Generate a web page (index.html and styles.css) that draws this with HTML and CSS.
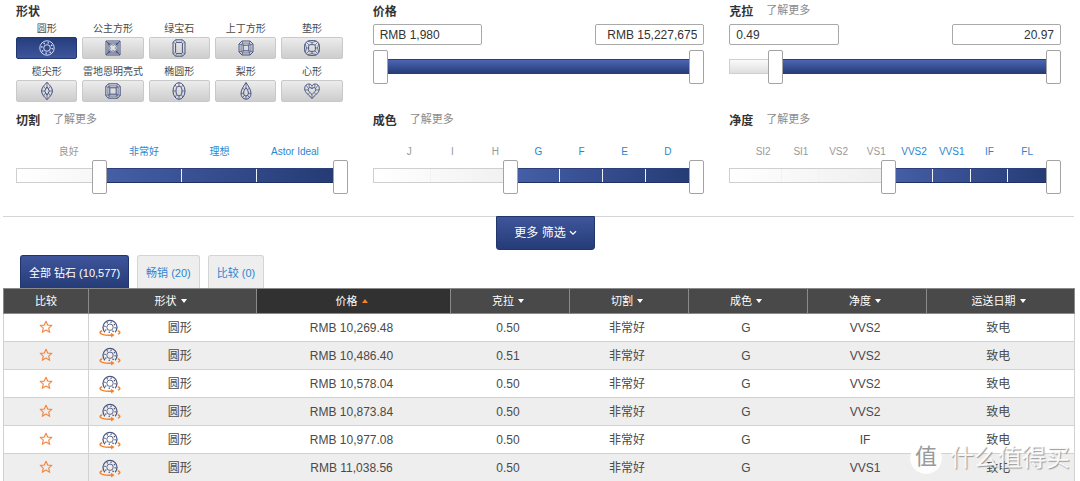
FILE: index.html
```html
<!DOCTYPE html>
<html lang="zh-CN">
<head>
<meta charset="utf-8">
<meta name="viewport" content="width=device-width, initial-scale=1">
<title>钻石筛选</title>
<link rel="stylesheet" href="styles.css">
</head>
<body>
<svg class="sprite" aria-hidden="true">
  <symbol id="round" viewBox="0 0 18 18"><circle cx="9" cy="9" r="7.2"/><circle cx="9" cy="9" r="3.3"/><circle cx="9" cy="9" r="5.3" stroke-width="1.6" stroke-dasharray="1.3 2.86"/></symbol>
  <symbol id="princess" viewBox="0 0 18 18"><path d="M2 2H16V16H2ZM4 4H14V14H4ZM2 2 6.5 6.5M16 2 11.5 6.5M2 16 6.5 11.5M16 16 11.5 11.5"/><path stroke-width=".7" d="M4 4 6.3 9 4 14 9 11.7 14 14 11.7 9 14 4 9 6.3Z"/></symbol>
  <symbol id="emerald" viewBox="0 0 18 18"><path d="M5.5.8H12.5L15 3.3V14.7L12.5 17.2H5.5L3 14.7V3.3ZM6.6 3.4H11.4L12.4 4.4V13.6L11.4 14.6H6.6L5.6 13.6V4.4Z"/><path stroke-width=".6" d="M5.5.8 6.6 3.4M12.5.8 11.4 3.4M15 3.3 12.4 4.4M3 3.3 5.6 4.4M3 14.7 5.6 13.6M5.5 17.2 6.6 14.6M12.5 17.2 11.4 14.6M15 14.7 12.4 13.6"/></symbol>
  <symbol id="asscher" viewBox="0 0 18 18"><path d="M5 2H13L16 5V13L13 16H5L2 13V5ZM6.2 6.2H11.8V11.8H6.2Z"/><path stroke-width=".7" d="M5.6 4.1H12.4L13.9 5.6V12.4L12.4 13.9H5.6L4.1 12.4V5.6ZM5 2 6.2 6.2M13 2 11.8 6.2M16 5 11.8 6.2M2 5 6.2 6.2M2 13 6.2 11.8M5 16 6.2 11.8M13 16 11.8 11.8M16 13 11.8 11.8"/></symbol>
  <symbol id="cushion" viewBox="0 0 18 18"><rect x="1.6" y="1.6" width="14.8" height="14.8" rx="5.5"/><rect x="5.6" y="5.6" width="6.8" height="6.8" rx="2"/><path stroke-width=".7" d="M5 2.2 9 3.6 13 2.2M5 15.8 9 14.4 13 15.8M2.2 5 3.6 9 2.2 13M15.8 5 14.4 9 15.8 13M3.5 3.5 6 6M14.5 3.5 12 6M3.5 14.5 6 12M14.5 14.5 12 12M9 3.6V5.6M9 12.4V14.4M3.6 9H5.6M12.4 9H14.4"/></symbol>
  <symbol id="marquise" viewBox="0 0 18 18"><path d="M9 .4C12.5 3.5 14.4 6.4 14.4 9S12.5 14.5 9 17.6C5.5 14.5 3.6 11.6 3.6 9S5.5 3.5 9 .4ZM9 4.8 11.4 9 9 13.2 6.6 9Z"/><path stroke-width=".7" d="M9 .4V4.8M9 13.2V17.6M3.6 9H6.6M11.4 9H14.4M5.7 4.2 7.7 7M12.3 4.2 10.3 7M5.7 13.8 7.7 11M12.3 13.8 10.3 11"/></symbol>
  <symbol id="radiant" viewBox="0 0 18 18"><path d="M4.4 1.8H13.6L16.2 4.4V13.6L13.6 16.2H4.4L1.8 13.6V4.4ZM5.8 5.8H12.2V12.2H5.8Z"/><path stroke-width=".7" d="M5.2 3.9H12.8L14.1 5.2V12.8L12.8 14.1H5.2L3.9 12.8V5.2ZM4.4 1.8 5.8 5.8M13.6 1.8 12.2 5.8M16.2 4.4 12.2 5.8M1.8 4.4 5.8 5.8M1.8 13.6 5.8 12.2M4.4 16.2 5.8 12.2M13.6 16.2 12.2 12.2M16.2 13.6 12.2 12.2"/></symbol>
  <symbol id="oval" viewBox="0 0 18 18"><ellipse cx="9" cy="9" rx="6" ry="8.3"/><ellipse cx="9" cy="9" rx="3" ry="4.8"/><path stroke-width=".7" d="M9 .7V4.2M9 13.8V17.3M3 9H6M12 9H15M5 2.9 7 5.6M13 2.9 11 5.6M5 15.1 7 12.4M13 15.1 11 12.4"/></symbol>
  <symbol id="pear" viewBox="0 0 18 18"><path d="M9 .6C6.4 4.3 4 8 4 11.6A5 5.6 0 0 0 14 11.6C14 8 11.6 4.3 9 .6ZM9 5.5C7.5 7.7 6.6 9.5 6.6 11.2A2.4 2.8 0 0 0 11.4 11.2C11.4 9.5 10.5 7.7 9 5.5Z"/><path stroke-width=".7" d="M9 .6V5.5M5.6 6 7.6 8M12.4 6 10.4 8M4 11.4H6.6M11.4 11.4H14M9 14V17.2M5.6 15.6 7.4 13.4M12.4 15.6 10.6 13.4"/></symbol>
  <symbol id="heart" viewBox="0 0 18 18"><path d="M9 3.8C7.6 1.7 4.8 1.4 3 3.2 1 5.2 1.4 8.4 3.2 10.6 4.9 12.7 7 14.5 9 16.4 11 14.5 13.1 12.7 14.8 10.6 16.6 8.4 17 5.2 15 3.2 13.2 1.4 10.4 1.7 9 3.8ZM9 6.8C8 5.4 6.3 5.2 5.5 6.4 4.6 8 5.9 9.6 9 12.6 12.1 9.6 13.4 8 12.5 6.4 11.7 5.2 10 5.4 9 6.8Z"/><path stroke-width=".7" d="M9 3.8V6.8M3 3.2 5.5 6.4M15 3.2 12.5 6.4M6.2 2V5.5M11.8 2V5.5M1.8 7.8 5.3 8M16.2 7.8 12.7 8M5 12.5 6.8 10.6M13 12.5 11.2 10.6M9 12.6V16.4"/></symbol>
  <symbol id="spin" viewBox="0 0 22 20">
    <g fill="none" stroke="#4c5780"><path stroke-width="1.3" d="M5.9 14.2A7 7 0 1 1 16.1 14.2"/><circle cx="11" cy="9.2" r="3.2" stroke-width=".9"/><circle cx="11" cy="9.2" r="5.1" stroke-width="1.5" stroke-dasharray="1.2 2.8"/></g>
    <path fill="none" stroke="#f5822a" stroke-width="1.5" d="M3.2 12.8C.4 13.8.2 15.4 3.3 16.4 6 17.2 9.5 17.4 13 17.2M18.8 12.8C21.3 13.6 21.8 15 18.8 16.1"/><path fill="#f5822a" d="M11.8 14.8 15.6 17.1 12.2 19.5Z"/>
  </symbol>
  <symbol id="star" viewBox="0 0 14 14"><path fill="none" stroke="#f28a45" stroke-width="1.2" stroke-linejoin="round" d="M7 1.3 8.7 5.1 12.8 5.4 9.7 8.1 10.7 12.3 7 10.1 3.3 12.3 4.3 8.1 1.2 5.4 5.3 5.1Z"/></symbol>
  <symbol id="down" viewBox="0 0 6 4"><path fill="currentColor" d="M0 0H6L3 4Z"/></symbol>
  <symbol id="up" viewBox="0 0 6 4"><path fill="currentColor" d="M0 4H6L3 0Z"/></symbol>
</svg>

<main class="page">
  <form class="filters">
    <section class="filter">
      <div class="filter-head"><h2>形状</h2></div>
      <div class="shapes">
        <div class="shape"><span id="s1">圆形</span><button type="button" class="selected" aria-pressed="true" aria-labelledby="s1"><svg><use href="#round"/></svg></button></div>
        <div class="shape"><span id="s2">公主方形</span><button type="button" aria-labelledby="s2"><svg><use href="#princess"/></svg></button></div>
        <div class="shape"><span id="s3">绿宝石</span><button type="button" aria-labelledby="s3"><svg><use href="#emerald"/></svg></button></div>
        <div class="shape"><span id="s4">上丁方形</span><button type="button" aria-labelledby="s4"><svg><use href="#asscher"/></svg></button></div>
        <div class="shape"><span id="s5">垫形</span><button type="button" aria-labelledby="s5"><svg><use href="#cushion"/></svg></button></div>
        <div class="shape"><span id="s6">榄尖形</span><button type="button" aria-labelledby="s6"><svg><use href="#marquise"/></svg></button></div>
        <div class="shape"><span id="s7">雷地恩明亮式</span><button type="button" aria-labelledby="s7"><svg><use href="#radiant"/></svg></button></div>
        <div class="shape"><span id="s8">椭圆形</span><button type="button" aria-labelledby="s8"><svg><use href="#oval"/></svg></button></div>
        <div class="shape"><span id="s9">梨形</span><button type="button" aria-labelledby="s9"><svg><use href="#pear"/></svg></button></div>
        <div class="shape"><span id="s10">心形</span><button type="button" aria-labelledby="s10"><svg><use href="#heart"/></svg></button></div>
      </div>
    </section>

    <section class="filter">
      <div class="filter-head"><h2 id="price">价格</h2></div>
      <div class="bounds"><input type="text" aria-labelledby="price" value="RMB 1,980"><input type="text" class="max" aria-labelledby="price" value="RMB 15,227,675"></div>
      <div class="slider">
        <div class="track"><div class="fill" style="left:0%"></div></div>
        <input type="range" aria-labelledby="price" step="any" value="0"><input type="range" aria-labelledby="price" step="any" value="100">
      </div>
    </section>

    <section class="filter">
      <div class="filter-head"><h2 id="carat">克拉</h2><a href="#carat">了解更多</a></div>
      <div class="bounds"><input type="text" aria-labelledby="carat" value="0.49"><input type="text" class="max" aria-labelledby="carat" value="20.97"></div>
      <div class="slider">
        <div class="track"><div class="fill" style="left:14%"></div></div>
        <input type="range" aria-labelledby="carat" step="any" value="12.3"><input type="range" aria-labelledby="carat" step="any" value="100">
      </div>
    </section>

    <section class="filter">
      <div class="filter-head"><h2 id="cut">切割</h2><a href="#cut">了解更多</a></div>
      <div class="grades"><span>良好</span><span class="on">非常好</span><span class="on">理想</span><span class="on">Astor Ideal</span></div>
      <div class="slider stepped">
        <div class="track"><div class="fill" style="left:25%"></div><div class="ticks"><i></i><i></i><i></i><i></i></div></div>
        <input type="range" aria-labelledby="cut" step="any" value="24"><input type="range" aria-labelledby="cut" step="any" value="100">
      </div>
    </section>

    <section class="filter">
      <div class="filter-head"><h2 id="color">成色</h2><a href="#color">了解更多</a></div>
      <div class="grades"><span>J</span><span>I</span><span>H</span><span class="on">G</span><span class="on">F</span><span class="on">E</span><span class="on">D</span></div>
      <div class="slider stepped">
        <div class="track"><div class="fill" style="left:42%"></div><div class="ticks"><i></i><i></i><i></i><i></i><i></i><i></i><i></i></div></div>
        <input type="range" aria-labelledby="color" step="any" value="41.3"><input type="range" aria-labelledby="color" step="any" value="100">
      </div>
    </section>

    <section class="filter">
      <div class="filter-head"><h2 id="clarity">净度</h2><a href="#clarity">了解更多</a></div>
      <div class="grades"><span>SI2</span><span>SI1</span><span>VS2</span><span>VS1</span><span class="on">VVS2</span><span class="on">VVS1</span><span class="on">IF</span><span class="on">FL</span></div>
      <div class="slider stepped">
        <div class="track"><div class="fill" style="left:48%"></div><div class="ticks"><i></i><i></i><i></i><i></i><i></i><i></i><i></i><i></i></div></div>
        <input type="range" aria-labelledby="clarity" step="any" value="48"><input type="range" aria-labelledby="clarity" step="any" value="100">
      </div>
    </section>
  </form>

  <section class="results">
    <div class="more"><button type="button">更多 筛选 <svg viewBox="0 0 8 6"><path d="M1 1.2 4 4.2 7 1.2"/></svg></button></div>
    <nav class="tabs">
      <button type="button" class="selected">全部 钻石 (10,577)</button>
      <button type="button">畅销 (20)</button>
      <button type="button">比较 (0)</button>
    </nav>
    <table>
      <colgroup><col class="c-compare"><col class="c-shape"><col class="c-price"><col class="c-grade" span="4"><col class="c-date"></colgroup>
      <thead>
        <tr>
          <th>比较</th>
          <th><button type="button">形状 <svg><use href="#down"/></svg></button></th>
          <th class="sorted"><button type="button">价格 <svg><use href="#up"/></svg></button></th>
          <th><button type="button">克拉 <svg><use href="#down"/></svg></button></th>
          <th><button type="button">切割 <svg><use href="#down"/></svg></button></th>
          <th><button type="button">成色 <svg><use href="#down"/></svg></button></th>
          <th><button type="button">净度 <svg><use href="#down"/></svg></button></th>
          <th><button type="button">运送日期 <svg><use href="#down"/></svg></button></th>
        </tr>
      </thead>
      <tbody>
        <tr><td><button type="button" class="star" aria-label="比较"><svg><use href="#star"/></svg></button></td><td><div class="cell-shape"><svg><use href="#spin"/></svg><span>圆形</span></div></td><td>RMB 10,269.48</td><td>0.50</td><td>非常好</td><td>G</td><td>VVS2</td><td>致电</td></tr>
        <tr><td><button type="button" class="star" aria-label="比较"><svg><use href="#star"/></svg></button></td><td><div class="cell-shape"><svg><use href="#spin"/></svg><span>圆形</span></div></td><td>RMB 10,486.40</td><td>0.51</td><td>非常好</td><td>G</td><td>VVS2</td><td>致电</td></tr>
        <tr><td><button type="button" class="star" aria-label="比较"><svg><use href="#star"/></svg></button></td><td><div class="cell-shape"><svg><use href="#spin"/></svg><span>圆形</span></div></td><td>RMB 10,578.04</td><td>0.50</td><td>非常好</td><td>G</td><td>VVS2</td><td>致电</td></tr>
        <tr><td><button type="button" class="star" aria-label="比较"><svg><use href="#star"/></svg></button></td><td><div class="cell-shape"><svg><use href="#spin"/></svg><span>圆形</span></div></td><td>RMB 10,873.84</td><td>0.50</td><td>非常好</td><td>G</td><td>VVS2</td><td>致电</td></tr>
        <tr><td><button type="button" class="star" aria-label="比较"><svg><use href="#star"/></svg></button></td><td><div class="cell-shape"><svg><use href="#spin"/></svg><span>圆形</span></div></td><td>RMB 10,977.08</td><td>0.50</td><td>非常好</td><td>G</td><td>IF</td><td>致电</td></tr>
        <tr><td><button type="button" class="star" aria-label="比较"><svg><use href="#star"/></svg></button></td><td><div class="cell-shape"><svg><use href="#spin"/></svg><span>圆形</span></div></td><td>RMB 11,038.56</td><td>0.50</td><td>非常好</td><td>G</td><td>VVS1</td><td>致电</td></tr>
      </tbody>
    </table>
    <div class="watermark"><b>值</b><span>什么值得买</span></div>
  </section>
</main>
</body>
</html>
```

FILE: styles.css
```css
* { box-sizing: border-box; }

body {
  margin: 0;
  background: #fff;
  color: #4a4a4a;
  font: 12px/14px "Liberation Sans", "Noto Sans CJK SC", sans-serif;
}

button, input { font: inherit; color: inherit; margin: 0; }
button { cursor: pointer; }
.sprite { position: absolute; width: 0; height: 0; }

/* Filters */
.filters {
  display: grid;
  grid-template-columns: repeat(3, minmax(0, 1fr));
  gap: 10px 25px;
  padding: 3px 19px 22px 16px;
}

.filter-head { display: flex; align-items: flex-start; gap: 13px; height: 18px; }
.filter-head h2 { margin: 0; font-size: 12px; line-height: 18px; color: #333; }
.filter-head a { font-size: 11px; line-height: 14px; color: #8b8b8b; text-decoration: none; }

.shapes {
  display: grid;
  grid-template-columns: repeat(5, minmax(0, 1fr));
  gap: 5px;
  padding-right: 5px;
}
.shape { display: flex; flex-direction: column; }
.shape span { font-size: 10px; line-height: 16px; text-align: center; white-space: nowrap; }
.shape button {
  display: flex;
  align-items: center;
  justify-content: center;
  height: 22px;
  padding: 0;
  border: 1px solid #c9c9c9;
  border-radius: 2px;
  background: linear-gradient(#ececec, #cdcdcd);
  color: #46527f;
}
.shape button.selected {
  border-color: #22366f;
  background: linear-gradient(#263d7c, #3e559c);
  color: #d5dcf3;
}
.shape svg { width: 18px; height: 18px; fill: none; stroke: currentColor; stroke-width: 1; }

.bounds { display: flex; justify-content: space-between; margin-top: 3px; }
.bounds input {
  width: 33%;
  height: 21px;
  padding: 0 6px;
  border: 1px solid #a9a9a9;
  border-radius: 2px;
  background: #fff;
  color: #333;
}
.bounds .max { text-align: right; }

.grades { display: grid; grid-auto-flow: column; grid-auto-columns: minmax(0, 1fr); padding: 0 15px; margin-top: 14px; }
.grades span { display: flex; justify-content: center; font-size: 10px; line-height: 15px; color: #999; white-space: nowrap; }
.grades .on { color: #2a86d1; }

.slider { position: relative; height: 34px; padding-top: 9px; margin-top: 5px; }
.stepped { margin-top: 1px; padding-top: 8px; }
.track {
  position: relative;
  height: 15px;
  border: 1px solid #cfcfcf;
  background: linear-gradient(#fafafa, #dedede);
}
.fill {
  position: absolute;
  inset: -1px 5px -1px 0;
  border-top: 1px solid #2d3f78;
  background: linear-gradient(#4d65b3, #233a73);
}
.stepped .track { background: linear-gradient(90deg, #fff, #ececec 55%); }
.stepped .fill {
  border-bottom: 1px solid #1f3163;
  background: linear-gradient(90deg, #465fa7, #233a73);
}
.ticks {
  position: absolute;
  inset: 0 14px;
  display: grid;
  grid-auto-flow: column;
  grid-auto-columns: minmax(0, 1fr);
}
.ticks i { border-right: 1px solid #f0f2f8; }
.ticks i:last-child { border: 0; }

.slider input {
  position: absolute;
  inset: 0;
  width: 100%;
  height: 34px;
  appearance: none;
  background: none;
  pointer-events: none;
}
.slider input::-webkit-slider-thumb {
  appearance: none;
  width: 15px;
  height: 34px;
  border: 1px solid #a3a3a3;
  border-radius: 2px;
  background: #fff;
  pointer-events: auto;
}

/* Results */
.results { position: relative; margin: 0 6px 0 3px; border-top: 1px solid #d3d6d8; }
.more { display: flex; justify-content: center; margin-top: -1px; padding-left: 14px; }
.more button {
  display: flex;
  align-items: center;
  gap: 3px;
  height: 34px;
  padding: 0 17px;
  border: 1px solid #22366c;
  border-radius: 0 0 3px 3px;
  background: linear-gradient(#3e559b, #263c78);
  color: #fff;
}
.more svg { width: 8px; height: 6px; fill: none; stroke: #fff; stroke-width: 1.3; }

.tabs { display: flex; gap: 8px; padding-left: 17px; margin-top: 5px; }
.tabs button {
  height: 33px;
  padding: 2px 8px 0;
  border: 1px solid #d4d4d4;
  border-bottom: 0;
  border-radius: 3px 3px 0 0;
  background: #eee;
  color: #2a86d1;
  font-size: 11px;
}
.tabs .selected {
  border-color: #22366c;
  background: linear-gradient(#3e559b, #263c78);
  color: #fff;
}

table { width: 100%; table-layout: fixed; border-collapse: collapse; text-align: center; }
.c-compare { width: 85px; }
.c-shape { width: 168px; }
.c-price { width: 194px; }
.c-grade { width: 119px; }
.c-date { width: 148px; }

th {
  height: 25px;
  padding: 0 4px 0 0;
  border: 1px solid #8a8a8a;
  background: #494949;
  color: #fff;
  font-size: 11px;
  font-weight: 400;
}
th:first-child { padding: 0; }
th.sorted { background: #313131; }
th button { padding: 0; border: 0; background: none; }
th svg { width: 6px; height: 4px; margin-left: 1px; vertical-align: 2px; }
th.sorted svg { color: #f5822a; }

td { height: 28px; padding: 0 4px 0 0; border-bottom: 1px solid #d2d2d2; }
td:first-child { padding: 0; border-left: 1px solid #d2d2d2; border-right: 1px solid #d2d2d2; }
td:last-child { border-right: 1px solid #d2d2d2; }
tbody tr:nth-child(even) { background: #eee; }

.star { display: block; margin: 0 auto; padding: 0 0 2px; border: 0; background: none; }
.star svg { display: block; width: 14px; height: 14px; }
.cell-shape { display: flex; align-items: center; padding-left: 10px; }
.cell-shape svg { width: 22px; height: 20px; }
.cell-shape span { flex: 1; padding-right: 14px; }

/* Site mark over the last rows */
.watermark {
  position: absolute;
  right: 4px;
  bottom: 8px;
  display: flex;
  align-items: center;
  gap: 8px;
  color: rgba(255, 255, 255, 0.9);
  font-size: 24px;
  line-height: 32px;
  text-shadow: 1px 1px 1px #999;
  pointer-events: none;
}
.watermark b {
  width: 32px;
  height: 32px;
  border-radius: 50%;
  background: rgba(255, 255, 255, 0.85);
  color: #999;
  font-size: 22px;
  font-weight: 400;
  line-height: 30px;
  text-align: center;
  text-shadow: none;
}
```
